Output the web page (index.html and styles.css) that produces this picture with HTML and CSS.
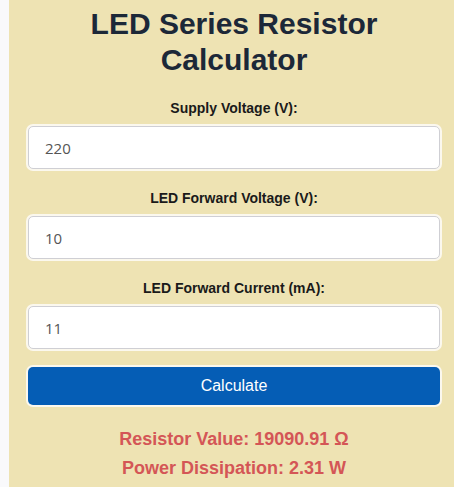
FILE: index.html
```html
<!DOCTYPE html>
<html lang="en">

<head>
  <meta charset="UTF-8">
  <title>LED Series Resistor Calculator</title>
  <link rel="stylesheet" href="styles.css">
</head>

<body>

  <div class="calc">
    <h1>LED Series Resistor Calculator</h1>

    <form id="ledForm">
      <label for="supply">Supply Voltage (V):</label>
      <input type="number" id="supply" name="supply" value="220" required>

      <label for="forwardV">LED Forward Voltage (V):</label>
      <input type="number" id="forwardV" name="forwardV" value="10" required>

      <label for="forwardI">LED Forward Current (mA):</label>
      <input type="number" id="forwardI" name="forwardI" value="11" required>

      <button type="submit">Calculate</button>
    </form>

    <div class="result">
      <p id="resistor">Resistor Value: 19090.91 Ω</p>
      <p id="power">Power Dissipation: 2.31 W</p>
    </div>
  </div>

  <script>
    document.getElementById('ledForm').addEventListener('submit', function (event) {
      event.preventDefault();
      const vs = parseFloat(document.getElementById('supply').value);
      const vf = parseFloat(document.getElementById('forwardV').value);
      const i = parseFloat(document.getElementById('forwardI').value) / 1000;

      const r = (vs - vf) / i;
      const p = (vs - vf) * i;

      document.getElementById('resistor').textContent = 'Resistor Value: ' + r.toFixed(2) + ' Ω';
      document.getElementById('power').textContent = 'Power Dissipation: ' + p.toFixed(2) + ' W';
    });
  </script>

</body>

</html>
```

FILE: styles.css
```css
html,
body {
  overflow: hidden;
}

body {
  font-family: "Liberation Sans", Arial, sans-serif;
  margin: 0;
  background-color: #f9f9fb;
}

.calc {
  width: 450px;
  margin-left: 9px;
  padding: 6px 19px 20px;
  box-sizing: border-box;
  background-color: #eee3b3;
  text-align: center;
}

h1 {
  margin: 0 0 22px;
  font-size: 30px;
  line-height: 36px;
  color: #1c2838;
}

label {
  display: block;
  font-size: 14px;
  line-height: 16px;
  font-weight: bold;
  color: #1a1a1a;
  margin-bottom: 10px;
}

input[type="number"] {
  display: block;
  width: 100%;
  height: 43px;
  padding: 0 16px;
  margin-bottom: 21px;
  border: 1px solid #cfcfd4;
  border-radius: 5px;
  box-shadow: 0 0 0 2px #fbf8ee;
  box-sizing: border-box;
  font-family: "Open Sans", sans-serif;
  font-size: 15px;
  color: #555;
  text-align: left;
  -moz-appearance: textfield;
}

input::-webkit-outer-spin-button,
input::-webkit-inner-spin-button {
  -webkit-appearance: none;
  margin: 0;
}

button {
  display: block;
  width: 100%;
  height: 38px;
  margin-top: -3px;
  border: none;
  border-radius: 5px;
  box-shadow: 0 0 0 2px #fbf8ee;
  background-color: #055db5;
  color: white;
  font-family: "Liberation Sans", Arial, sans-serif;
  font-size: 16px;
  cursor: pointer;
}

.result {
  margin-top: 24px;
}

.result p {
  margin: 0 0 8px;
  font-size: 18px;
  line-height: 21px;
  font-weight: bold;
  color: #d45656;
}
```
